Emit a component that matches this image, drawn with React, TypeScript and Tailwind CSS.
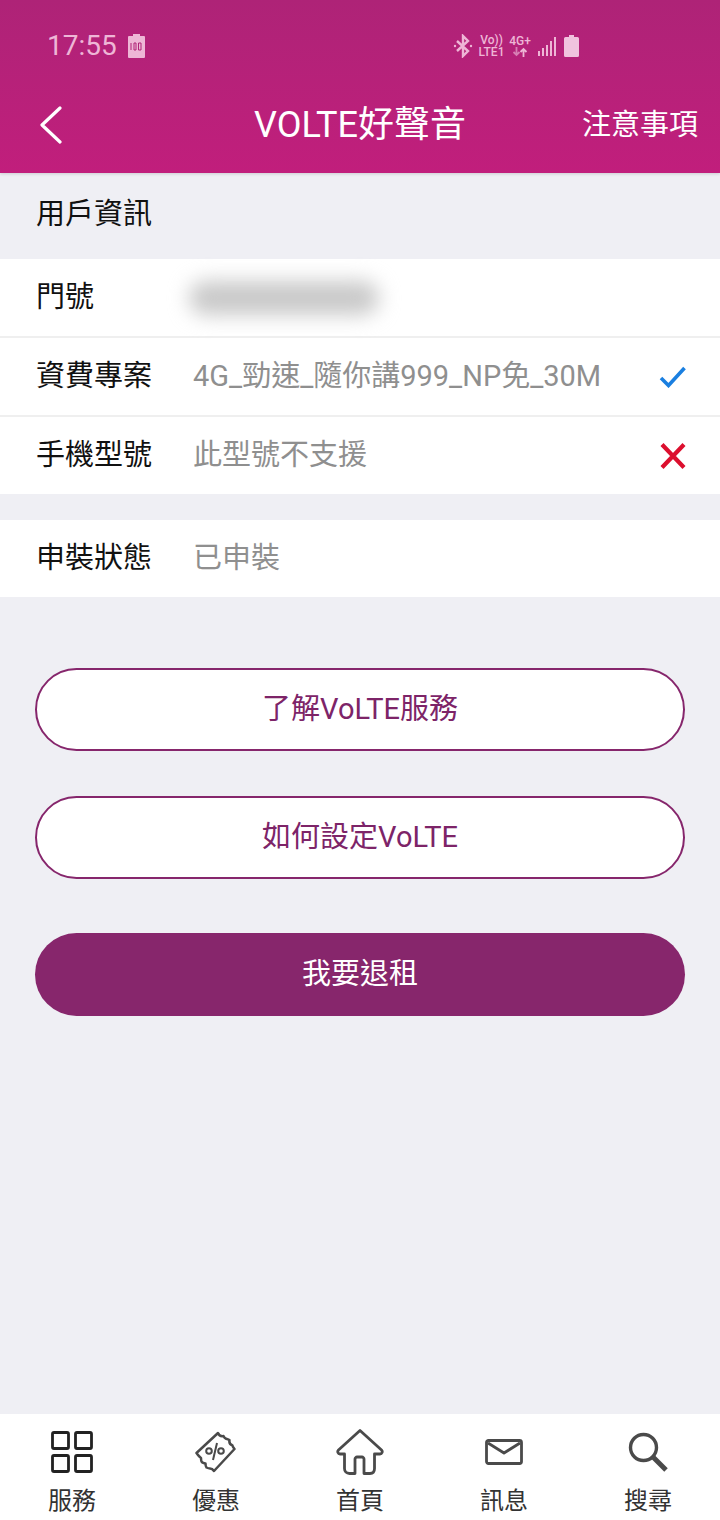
import type { ReactNode } from "react";

function StatusBar() {
  return (
    <div className="flex h-[92px] items-center pl-[47px] text-[#eeb6d6]">
      <span className="w-[80px] text-[28px] leading-none">17:55</span>
      <svg width="17" height="24" viewBox="0 0 17 24" className="ml-[1px]">
        <path d="M5 0h7v2h4a1 1 0 0 1 1 1v20a1 1 0 0 1-1 1H1a1 1 0 0 1-1-1V3a1 1 0 0 1 1-1h4z" fill="currentColor" />
        <path d="M3 9v7M6 9h2v7H6zM10.500 9h2.500v7h-2.500z" stroke="#af2377" strokeWidth="1" fill="none" />
      </svg>
      <div className="ml-[308px] flex items-center">
        <svg width="20" height="24" viewBox="0 0 20 24" fill="none" stroke="currentColor" strokeWidth="2.400">
          <path d="M4 7l11 10-5 5V2l5 5L4 17" />
          <circle cx="2" cy="12" r="1.200" fill="currentColor" stroke="none" />
          <circle cx="18" cy="12" r="1.200" fill="currentColor" stroke="none" />
        </svg>
        <div className="ml-[5px] flex w-[27px] flex-col items-center text-[12px] leading-[12px] font-medium">
          <span>Vo))</span>
          <span>LTE1</span>
        </div>
        <div className="ml-[5px] flex w-[20px] flex-col items-center text-[12px] leading-[12px] font-medium">
          <span>4G+</span>
          <svg width="16" height="10" viewBox="0 0 16 10" fill="none" strokeWidth="1.800">
            <path d="M4.500 0v8M1.500 5l3 3 3-3" stroke="#d77fb4" />
            <path d="M11.500 10V2M8.500 5l3-3 3 3" stroke="currentColor" />
          </svg>
        </div>
        <svg width="19" height="20" viewBox="0 0 19 20" fill="currentColor" className="ml-[8px]">
          <rect x="0" y="15" width="2" height="5" />
          <rect x="4" y="12" width="2" height="8" />
          <rect x="8" y="9" width="2" height="11" />
          <rect x="12" y="5" width="2" height="15" />
          <rect x="16" y="1" width="2" height="19" />
        </svg>
        <svg width="15" height="22" viewBox="0 0 15 22" fill="#f0c3de" className="ml-[7px]">
          <path d="M5 0h5v2h3.500a1.500 1.500 0 0 1 1.500 1.500v17a1.500 1.500 0 0 1-1.500 1.500h-12A1.500 1.500 0 0 1 0 20.500v-17A1.500 1.500 0 0 1 1.500 2H5z" />
        </svg>
      </div>
    </div>
  );
}

function Header() {
  return (
    <header className="relative z-10 h-[173px] bg-gradient-to-b from-[#ae2377] to-[#c11e7c] shadow-[0_1px_3px_rgba(0,0,0,0.15)]">
      <StatusBar />
      <div className="grid h-[66px] grid-cols-[1fr_auto_1fr] items-center text-white">
        <div className="pl-[38px]">
          <svg width="26" height="38" viewBox="0 0 26 38" fill="none" stroke="white" strokeWidth="3.200" strokeLinecap="round" strokeLinejoin="round">
            <path d="M22 2L4 19l18 17" />
          </svg>
        </div>
        <h1 className="text-[36px] leading-none">VOLTE好聲音</h1>
        <div className="pr-[22px] text-right text-[29px] leading-none">注意事項</div>
      </div>
    </header>
  );
}

function Row({ label, value, icon }: { label: string; value?: ReactNode; icon?: ReactNode }) {
  return (
    <div className="flex h-[77px] items-center bg-white pl-[36px] pr-[34px] text-[29px] leading-none">
      <span className="w-[157px] shrink-0 text-[#111]">{label}</span>
      <span className="flex-1 whitespace-nowrap text-[#8f8f8f]">{value}</span>
      {icon}
    </div>
  );
}

const CheckIcon = (
  <svg width="28" height="22" viewBox="0 0 28 22" fill="none" stroke="#1a7fe0" strokeWidth="3.600" className="mr-[-1px]">
    <path d="M2 12l7.500 7.500L25.500 2" />
  </svg>
);

const CrossIcon = (
  <svg width="28" height="28" viewBox="0 0 28 28" fill="none" stroke="#dc0f2e" strokeWidth="4.200" className="mr-[-1px]">
    <path d="M3 2.500l22 23M25 2.500l-22 23" />
  </svg>
);

function OutlineButton({ children }: { children: ReactNode }) {
  return (
    <button className="h-[83px] w-full rounded-full border-2 border-[#86266c] bg-white text-[29px] text-[#7d2468]">
      {children}
    </button>
  );
}

function Tab({ icon, label }: { icon: ReactNode; label: string }) {
  return (
    <div className="flex flex-col items-center">
      <div className="flex h-[62px] w-full items-center justify-center">{icon}</div>
      <span className="text-[24px] leading-[36px] text-[#333]">{label}</span>
    </div>
  );
}

function TabBar() {
  return (
    <nav className="grid h-[106px] grid-cols-5 bg-white pt-[7px]">
      <Tab
        label="服務"
        icon={
          <svg width="42" height="42" viewBox="0 0 42 42" fill="none" stroke="#222" strokeWidth="2.800">
            <rect x="1.500" y="1.500" width="16" height="16" rx="1.500" />
            <rect x="24.500" y="1.500" width="16" height="16" rx="1.500" />
            <rect x="1.500" y="24.500" width="16" height="16" rx="1.500" />
            <rect x="24.500" y="24.500" width="16" height="16" rx="1.500" />
          </svg>
        }
      />
      <Tab
        label="優惠"
        icon={
          <svg width="42" height="42" viewBox="0 0 42 42" fill="none" stroke="#4a4a4a" strokeWidth="2.500" strokeLinejoin="round">
            <path d="M1.500 22L23 2c1 2.500 3 3.500 5.500 3 .5 1 1 2 2 2.500 1.500.5 3 1 4 1.500-.5 2.500.5 4.500 3 5.500 0 1 .5 1.500 2 3.500L19 40c-1-1.500-2-2.500-4-2.500-1.500 0-2.500-.5-3.500-1-1-1-1-2.500-1-4-1.500-.500-3.500-.5-4-2-.5-1-.5-2.500-.5-3.500-1.500-1-3-3-4.500-5z" />
            <circle cx="14" cy="20" r="2.800" strokeWidth="2" />
            <circle cx="26" cy="20" r="2.800" strokeWidth="2" />
            <path d="M18 29l4-17" strokeWidth="2" />
          </svg>
        }
      />
      <Tab
        label="首頁"
        icon={
          <svg width="48" height="46" viewBox="0 0 48 46" fill="none" stroke="#4a4a4a" strokeWidth="2.800" strokeLinejoin="round">
            <path d="M24 1.500L2.500 21c-1.500 1.500-.5 4 1.500 4h4.500v14.500c0 3 2 5 5 5h5.500V30c0-1 1-2 2-2h5c1 0 2 1 2 2v14.500h6c3 0 4.500-2 4.500-5V25H44c2 0 3-2.500 1.500-4z" />
          </svg>
        }
      />
      <Tab
        label="訊息"
        icon={
          <svg width="38" height="26" viewBox="0 0 38 26" fill="none" stroke="#4a4a4a" strokeWidth="2.800" strokeLinejoin="round">
            <rect x="1.500" y="1.500" width="35" height="23" rx="2" />
            <path d="M3 4l16 10L35 4" />
          </svg>
        }
      />
      <Tab
        label="搜尋"
        icon={
          <svg width="40" height="40" viewBox="0 0 40 40" fill="none" stroke="#4a4a4a">
            <circle cx="15.500" cy="15.500" r="13" strokeWidth="3.400" />
            <path d="M25 25l13 13" strokeWidth="5" />
          </svg>
        }
      />
    </nav>
  );
}

export default function App() {
  return (
    <div className="flex h-[1520px] w-[720px] flex-col overflow-hidden bg-[#efeff4] [font-family:Roboto,'Noto_Sans_CJK_TC',sans-serif]">
      <Header />
      <main className="flex-1">
        <div className="flex h-[86px] items-center pl-[36px] pb-[2px] text-[29px] text-[#111]">用戶資訊</div>
        <div className="flex flex-col gap-[2px] bg-[#efefef]">
          <Row
            label="門號"
            value={<div className="ml-[-4px] h-[34px] w-[190px] rounded-full bg-[#c9c9c9] blur-[10px]" />}
          />
          <Row label="資費專案" value="4G_勁速_隨你講999_NP免_30M" icon={CheckIcon} />
          <Row label="手機型號" value="此型號不支援" icon={CrossIcon} />
        </div>
        <div className="mt-[26px]">
          <Row label="申裝狀態" value="已申裝" />
        </div>
        <div className="mt-[71px] flex flex-col px-[35px]">
          <OutlineButton>了解VoLTE服務</OutlineButton>
          <div className="mt-[45px]">
            <OutlineButton>如何設定VoLTE</OutlineButton>
          </div>
          <button className="mt-[54px] h-[83px] rounded-full bg-[#87266c] text-[29px] text-white">我要退租</button>
        </div>
      </main>
      <TabBar />
    </div>
  );
}
